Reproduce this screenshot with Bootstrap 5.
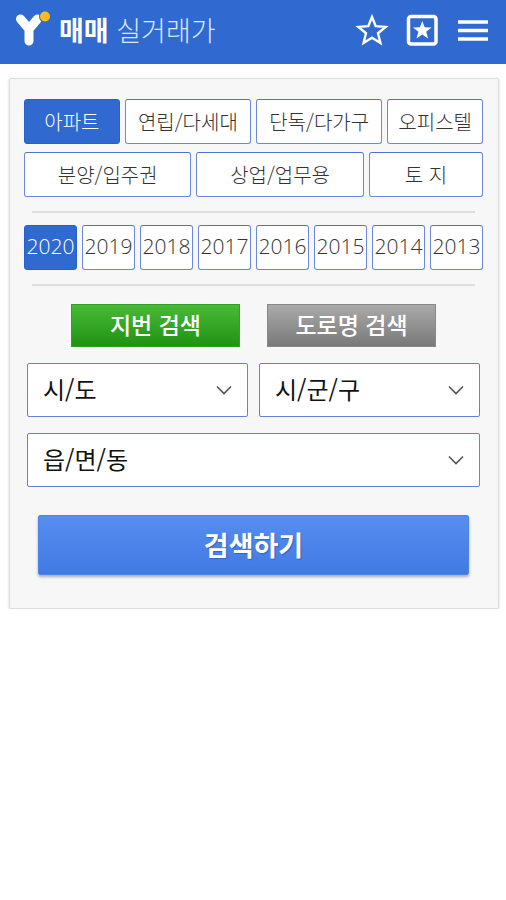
<!DOCTYPE html>
<html lang="ko">
<head>
<meta charset="utf-8">
<meta name="viewport" content="width=device-width, initial-scale=1">
<title>매매 실거래가</title>
<link href="https://cdn.jsdelivr.net/npm/bootstrap@5.3.0/dist/css/bootstrap.min.css" rel="stylesheet">
<style>
body { font-family: "Noto Sans CJK KR", sans-serif; background: #fff; color: #333; }
.topbar { background: #3069cf; height: 64px; padding: 0 18px 4px 15px; color: #fff; }
.topbar h1 { font-size: 27px; line-height: 40px; font-weight: 300; color: #dce8ff; }
.topbar h1 strong { font-weight: 700; font-size: 27px; color: #fff; }
.icon-btn { color: #fff; line-height: 0; }
.panel { margin: 14px 7px 0 9px; padding: 20px 15px 33px 14px; background: #f7f7f7; border: 1px solid #dcdcdc; border-radius: 2px; box-shadow: 0 1px 3px rgba(0,0,0,.15); }
.choices { gap: 5px; }
.choice { height: 45px; padding: 0; border: 1px solid #6c88da; border-top-color: #4a73d0; border-radius: 3px; background: #fff; color: #333; font-size: 20px; line-height: 41px; font-weight: 300; white-space: nowrap; }
.choice.picked { background: #3069cf; border-color: #2560cc; color: #fff; }
.w-s { flex: 95 1 0; } .w-m { flex: 126 1 0; } .w-l { flex: 168 1 0; } .w-t { flex: 114 1 0; }
.year { flex: 1 1 0; min-width: 0; padding-bottom: 3px; line-height: 40px; font-family: "Open Sans", "Noto Sans", sans-serif; font-size: 21px; }
.rule { height: 2px; margin: 14px 8px 12px; background: #dedede; }
.modes { gap: 27px; margin: 18px 47px 16px; }
.mode { flex: 1 1 0; height: 43px; padding: 0; border: 1px solid; border-radius: 0; color: #fff; font-size: 23px; line-height: 36px; padding-bottom: 3px; font-weight: 500; }
.mode-lot { background: linear-gradient(#49b937, #209313); border-color: #2ba51b; }
.mode-road { background: linear-gradient(#aaa, #797979); border-color: #888; }
.places { display: grid; grid-template-columns: 1fr 1fr; gap: 16px 11px; margin: 0 3px; }
.place { height: 54px; padding: 0 36px 2px 15px; border: 1px solid #6480d7; border-radius: 2px; background-color: #fff; color: #111; font-size: 24px; line-height: 50px; font-weight: 400;
  background-image: url("data:image/svg+xml,%3Csvg xmlns='http://www.w3.org/2000/svg' viewBox='0 0 16 16'%3E%3Cpath d='M1 4.5l7 7 7-7' fill='none' stroke='%23555' stroke-width='1.6'/%3E%3C/svg%3E"); background-size: 16px 16px; background-position: right 15px center; }
.place-wide { grid-column: 1 / -1; }
.go { height: 60px; margin: 28px 14px 0; padding: 0; border: 1px solid #4d84e8; border-radius: 2px; background: linear-gradient(#568df0, #427ae4); color: #fff; font-size: 27px; line-height: 56px; font-weight: 700; box-shadow: 0 2px 3px rgba(0,0,0,.3); text-shadow: 1px 1px 1px rgba(20,50,130,.4); }
</style>
</head>
<body>
<header class="topbar d-flex align-items-center">
  <svg class="me-2 flex-shrink-0" width="36" height="40" viewBox="0 0 36 40" aria-hidden="true"><path d="M5.500 9l8.500 10L22.500 9M14 19v12" fill="none" stroke="#fff" stroke-width="9" stroke-linecap="round" stroke-linejoin="round"/><circle cx="30" cy="6.500" r="6" fill="#3069cf"/><circle cx="30" cy="6.500" r="5" fill="#fdbb20"/></svg>
  <h1 class="m-0 text-nowrap"><strong>매매</strong> 실거래가</h1>
  <div class="d-flex ms-auto gap-3 align-items-center">
    <button type="button" class="btn p-0 border-0 icon-btn" aria-label="즐겨찾기 추가"><svg width="34" height="34" viewBox="0 0 34 34"><path d="M17 4l3.700 9.200 9.900.7-7.600 6.400 2.400 9.700-8.400-5.300L8.600 30l2.400-9.700-7.600-6.400 9.900-.7z" fill="none" stroke="currentColor" stroke-width="2.400"/></svg></button>
    <button type="button" class="btn p-0 border-0 icon-btn" aria-label="즐겨찾기 목록"><svg width="34" height="34" viewBox="0 0 34 34"><rect x="3.500" y="3.500" width="27.500" height="27.500" rx="2.500" fill="none" stroke="currentColor" stroke-width="3.500"/><path d="M17.300 8l2.400 6.300 6.900.2-5.400 4.300 1.900 6.700-5.800-3.900-5.800 3.900 1.900-6.700L8 14.500l6.900-.2z" fill="currentColor"/></svg></button>
    <button type="button" class="btn p-0 border-0 icon-btn" aria-label="메뉴"><svg width="33" height="34" viewBox="0 0 33 34"><path d="M3 9h30M3 17.500h30M3 26h30" stroke="currentColor" stroke-width="3.500"/></svg></button>
  </div>
</header>
<main class="panel">
  <div class="choices d-flex mb-2">
    <button type="button" class="choice picked w-s">아파트</button>
    <button type="button" class="choice w-m">연립/다세대</button>
    <button type="button" class="choice w-m">단독/다가구</button>
    <button type="button" class="choice w-s">오피스텔</button>
  </div>
  <div class="choices d-flex">
    <button type="button" class="choice w-l">분양/입주권</button>
    <button type="button" class="choice w-l">상업/업무용</button>
    <button type="button" class="choice w-t">토 지</button>
  </div>
  <div class="rule"></div>
  <div class="choices d-flex">
    <button type="button" class="choice year picked">2020</button>
    <button type="button" class="choice year">2019</button>
    <button type="button" class="choice year">2018</button>
    <button type="button" class="choice year">2017</button>
    <button type="button" class="choice year">2016</button>
    <button type="button" class="choice year">2015</button>
    <button type="button" class="choice year">2014</button>
    <button type="button" class="choice year">2013</button>
  </div>
  <div class="rule"></div>
  <div class="modes d-flex">
    <button type="button" class="mode mode-lot">지번 검색</button>
    <button type="button" class="mode mode-road">도로명 검색</button>
  </div>
  <form>
    <div class="places">
      <select class="form-select place" aria-label="시/도"><option>시/도</option></select>
      <select class="form-select place" aria-label="시/군/구"><option>시/군/구</option></select>
      <select class="form-select place place-wide" aria-label="읍/면/동"><option>읍/면/동</option></select>
    </div>
    <div class="d-flex"><button type="button" class="go flex-fill">검색하기</button></div>
  </form>
</main>
<script src="https://cdn.jsdelivr.net/npm/bootstrap@5.3.0/dist/js/bootstrap.bundle.min.js"></script>
</body>
</html>
